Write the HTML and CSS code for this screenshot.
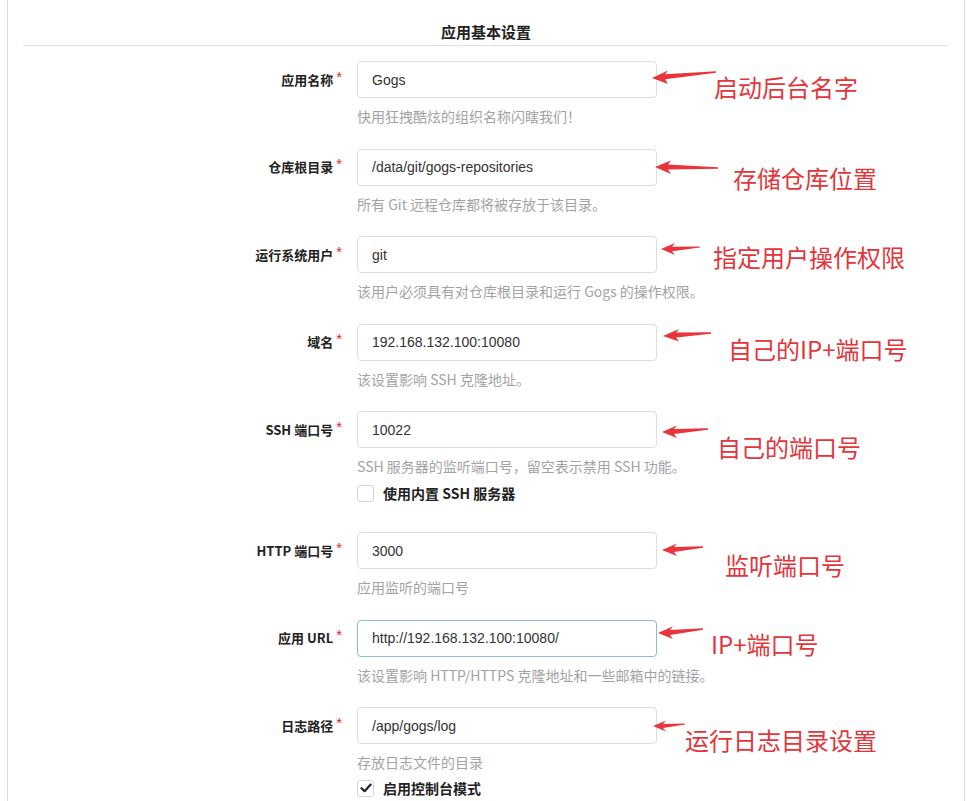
FILE: index.html
```html
<!DOCTYPE html>
<html lang="zh-CN">
<head>
<meta charset="utf-8">
<title>应用基本设置</title>
<link rel="stylesheet" href="styles.css">
</head>
<body>
<div class="page">
  <h4 class="title">应用基本设置</h4>
  <form class="form">
    <div class="field">
      <label class="lbl">应用名称<span class="req">*</span></label>
      <input class="inp" type="text" value="Gogs">
      <span class="help">快用狂拽酷炫的组织名称闪瞎我们！</span>
    </div>
    <div class="field">
      <label class="lbl">仓库根目录<span class="req">*</span></label>
      <input class="inp" type="text" value="/data/git/gogs-repositories">
      <span class="help">所有 Git 远程仓库都将被存放于该目录。</span>
    </div>
    <div class="field">
      <label class="lbl">运行系统用户<span class="req">*</span></label>
      <input class="inp" type="text" value="git">
      <span class="help">该用户必须具有对仓库根目录和运行 Gogs 的操作权限。</span>
    </div>
    <div class="field">
      <label class="lbl">域名<span class="req">*</span></label>
      <input class="inp" type="text" value="192.168.132.100:10080">
      <span class="help">该设置影响 SSH 克隆地址。</span>
    </div>
    <div class="field">
      <label class="lbl">SSH 端口号<span class="req">*</span></label>
      <input class="inp" type="text" value="10022">
      <span class="help">SSH 服务器的监听端口号，留空表示禁用 SSH 功能。</span>
      <div class="check check-gap">
        <span class="box"></span>
        <span class="check-label">使用内置 SSH 服务器</span>
      </div>
    </div>
    <div class="field">
      <label class="lbl">HTTP 端口号<span class="req">*</span></label>
      <input class="inp" type="text" value="3000">
      <span class="help">应用监听的端口号</span>
    </div>
    <div class="field">
      <label class="lbl">应用 URL<span class="req">*</span></label>
      <input class="inp focus" type="text" value="http://192.168.132.100:10080/">
      <span class="help">该设置影响 HTTP/HTTPS 克隆地址和一些邮箱中的链接。</span>
    </div>
    <div class="field">
      <label class="lbl">日志路径<span class="req">*</span></label>
      <input class="inp" type="text" value="/app/gogs/log">
      <span class="help">存放日志文件的目录</span>
      <div class="check">
        <span class="box checked"><svg viewBox="0 0 12 12" width="12" height="12"><path d="M1.5 6.2 L4.6 9.2 L10.6 2.6" fill="none" stroke="#222" stroke-width="2.2" stroke-linecap="round" stroke-linejoin="round"/></svg></span>
        <span class="check-label">启用控制台模式</span>
      </div>
    </div>
  </form>
</div>

<svg class="arrows" width="969" height="801" viewBox="0 0 969 801">
  <g fill="#e8343a">
    <polygon points="652,78 668,70.5 665,74.3 716,71.3 716,72.7 665,79.3 668,84"/>
    <polygon points="655,167 671,160.5 668,164.5 718,167.3 718,168.7 668,169.5 671,174"/>
    <polygon points="661,249 675,243 672,246.8 700,246.4 700,247.6 672,251.2 675,255"/>
    <polygon points="663,336 679,329 676,332.6 711,332.3 711,333.7 676,337.6 679,341.5"/>
    <polygon points="662,432 677,425.5 674,429 708,428.3 708,429.7 674,434 677,438"/>
    <polygon points="662,550 677,543.5 674,547 703,546.3 703,547.7 674,552 677,556"/>
    <polygon points="658,633 673,626.3 670,630 703,628.3 703,629.7 670,635 673,639"/>
    <polygon points="653,726 666,720.5 663,724 685,723.4 685,724.6 663,728 666,731.5"/>
  </g>
</svg>

<div class="notes">
  <span class="note n1">启动后台名字</span>
  <span class="note n2">存储仓库位置</span>
  <span class="note n3">指定用户操作权限</span>
  <span class="note n4">自己的IP+端口号</span>
  <span class="note n5">自己的端口号</span>
  <span class="note n6">监听端口号</span>
  <span class="note n7">IP+端口号</span>
  <span class="note n8">运行日志目录设置</span>
</div>
</body>
</html>
```

FILE: styles.css
```css
html, body {
  margin: 0;
  padding: 0;
  background: #ffffff;
}

body {
  position: relative;
  width: 969px;
  height: 801px;
  overflow: hidden;
  font-family: "Noto Sans CJK SC", "Noto Sans", sans-serif;
  color: rgba(0, 0, 0, 0.87);
}

.page {
  margin-left: 7px;
  width: 956px;
  min-height: 801px;
  border-left: 1px solid #dcdcdc;
  border-right: 1px solid #dcdcdc;
}

.title {
  margin: 0 15px;
  padding: 22px 0 3px;
  height: 20px;
  line-height: 20px;
  font-size: 15px;
  font-weight: 700;
  text-align: center;
  border-bottom: 1px solid #e2e2e2;
  color: #222;
}

.form {
  margin-top: 15px;
}

.field {
  display: grid;
  grid-template-columns: 334px 300px;
  column-gap: 15px;
  align-items: center;
  margin-bottom: 23.5px;
}

.lbl {
  grid-column: 1;
  justify-self: end;
  height: 18px;
  font-size: 13px;
  font-weight: 700;
  line-height: 18px;
  color: #222;
  white-space: nowrap;
}

.req {
  display: inline-block;
  margin-left: 3px;
  position: relative;
  top: -3px;
  color: #db2828;
  font-weight: 400;
  font-family: "Liberation Sans", sans-serif;
  font-size: 15px;
  line-height: 18px;
}

.inp {
  grid-column: 2;
  box-sizing: border-box;
  width: 300px;
  height: 37px;
  margin: 0;
  padding: 0 14px;
  border: 1px solid #dedede;
  border-radius: 4px;
  background: #fff;
  font-family: "Liberation Sans", Arial, sans-serif;
  font-size: 14px;
  color: #333;
  outline: none;
}

.inp.focus {
  border-color: #8fbad8;
}

.help {
  grid-column: 2;
  display: block;
  height: 18px;
  margin-top: 9px;
  font-size: 14px;
  line-height: 18px;
  color: #a3a3a3;
  white-space: nowrap;
}

.check {
  grid-column: 2;
  display: flex;
  align-items: center;
  gap: 9px;
  margin-top: 8px;
  height: 18px;
}

.check-gap {
  margin-top: 9px;
  margin-bottom: 6.5px;
}

.box {
  box-sizing: border-box;
  width: 17px;
  height: 17px;
  border: 1px solid #d4d4d5;
  border-radius: 3px;
  display: flex;
  align-items: center;
  justify-content: center;
  background: #fff;
}

.check-label {
  height: 18px;
  font-size: 14px;
  font-weight: 700;
  color: #222;
  line-height: 18px;
}

.arrows {
  position: absolute;
  left: 0;
  top: 0;
  pointer-events: none;
}

.notes {
  position: absolute;
  left: 0;
  top: 0;
  width: 969px;
  height: 801px;
  pointer-events: none;
}

.note {
  position: absolute;
  font-family: "Noto Sans CJK SC", sans-serif;
  font-size: 24px;
  line-height: 30px;
  color: #e3363c;
  white-space: nowrap;
}

.n1 { left: 714px; top: 72px; }
.n2 { left: 733px; top: 163px; }
.n3 { left: 713px; top: 242px; }
.n4 { left: 728px; top: 334px; }
.n5 { left: 717px; top: 432px; }
.n6 { left: 725px; top: 550px; }
.n7 { left: 711px; top: 629px; }
.n8 { left: 685px; top: 725px; }
```
